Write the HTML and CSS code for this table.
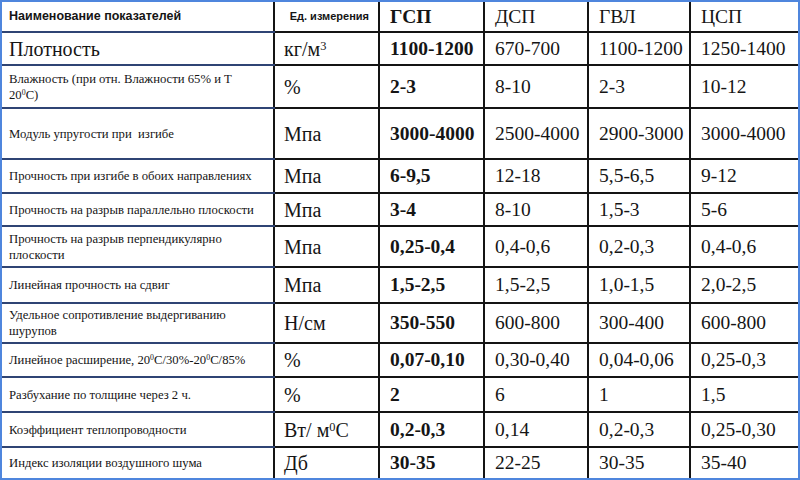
FILE: index.html
```html
<!DOCTYPE html>
<html lang="ru">
<head>
<meta charset="utf-8">
<title>Сравнение листовых материалов</title>
<link rel="stylesheet" href="styles.css">
</head>
<body>
<div class="frame">
<table class="specs">
  <colgroup>
    <col class="c-name"><col class="c-unit"><col class="c-gsp"><col class="c-dsp"><col class="c-gvl"><col class="c-csp">
  </colgroup>
  <tr class="h-head">
    <th class="hdr-name">Наименование показателей</th>
    <th class="hdr-unit">Ед. измерения</th>
    <th class="val bold">ГСП</th>
    <th class="val">ДСП</th>
    <th class="val">ГВЛ</th>
    <th class="val">ЦСП</th>
  </tr>
  <tr class="h-33">
    <td class="name big">Плотность</td>
    <td class="unit">кг/м<sup>3</sup></td>
    <td class="val bold">1100-1200</td>
    <td class="val">670-700</td>
    <td class="val">1100-1200</td>
    <td class="val">1250-1400</td>
  </tr>
  <tr class="h-43">
    <td class="name">Влажность (при отн. Влажности 65% и Т<br>20<sup>0</sup>С)</td>
    <td class="unit">%</td>
    <td class="val bold">2-3</td>
    <td class="val">8-10</td>
    <td class="val">2-3</td>
    <td class="val">10-12</td>
  </tr>
  <tr class="h-51">
    <td class="name">Модуль упругости при &nbsp;изгибе</td>
    <td class="unit">Мпа</td>
    <td class="val bold">3000-4000</td>
    <td class="val">2500-4000</td>
    <td class="val">2900-3000</td>
    <td class="val">3000-4000</td>
  </tr>
  <tr class="h-34">
    <td class="name">Прочность при изгибе в обоих направлениях</td>
    <td class="unit">Мпа</td>
    <td class="val bold">6-9,5</td>
    <td class="val">12-18</td>
    <td class="val">5,5-6,5</td>
    <td class="val">9-12</td>
  </tr>
  <tr class="h-33">
    <td class="name">Прочность на разрыв параллельно плоскости</td>
    <td class="unit">Мпа</td>
    <td class="val bold">3-4</td>
    <td class="val">8-10</td>
    <td class="val">1,5-3</td>
    <td class="val">5-6</td>
  </tr>
  <tr class="h-41">
    <td class="name">Прочность на разрыв перпендикулярно<br>плоскости</td>
    <td class="unit">Мпа</td>
    <td class="val bold">0,25-0,4</td>
    <td class="val">0,4-0,6</td>
    <td class="val">0,2-0,3</td>
    <td class="val">0,4-0,6</td>
  </tr>
  <tr class="h-36">
    <td class="name">Линейная прочность на сдвиг</td>
    <td class="unit">Мпа</td>
    <td class="val bold">1,5-2,5</td>
    <td class="val">1,5-2,5</td>
    <td class="val">1,0-1,5</td>
    <td class="val">2,0-2,5</td>
  </tr>
  <tr class="h-40">
    <td class="name">Удельное сопротивление выдергиванию<br>шурупов</td>
    <td class="unit">Н/см</td>
    <td class="val bold">350-550</td>
    <td class="val">600-800</td>
    <td class="val">300-400</td>
    <td class="val">600-800</td>
  </tr>
  <tr class="h-34">
    <td class="name">Линейное расширение, 20<sup>0</sup>С/30%-20<sup>0</sup>С/85%</td>
    <td class="unit">%</td>
    <td class="val bold">0,07-0,10</td>
    <td class="val">0,30-0,40</td>
    <td class="val">0,04-0,06</td>
    <td class="val">0,25-0,3</td>
  </tr>
  <tr class="h-35">
    <td class="name">Разбухание по толщине через 2 ч.</td>
    <td class="unit">%</td>
    <td class="val bold">2</td>
    <td class="val">6</td>
    <td class="val">1</td>
    <td class="val">1,5</td>
  </tr>
  <tr class="h-35">
    <td class="name">Коэффициент теплопроводности</td>
    <td class="unit">Вт/ м<sup>0</sup>С</td>
    <td class="val bold">0,2-0,3</td>
    <td class="val">0,14</td>
    <td class="val">0,2-0,3</td>
    <td class="val">0,25-0,30</td>
  </tr>
  <tr class="h-31">
    <td class="name">Индекс изоляции воздушного шума</td>
    <td class="unit">Дб</td>
    <td class="val bold">30-35</td>
    <td class="val">22-25</td>
    <td class="val">30-35</td>
    <td class="val">35-40</td>
  </tr>
</table>
</div>
</body>
</html>
```

FILE: styles.css
```css
html, body {
  margin: 0;
  padding: 0;
  background: #ffffff;
}

.frame {
  width: 800px;
  height: 480px;
  box-sizing: border-box;
  border: 2px solid #4f86dd;
  overflow: hidden;
}

.specs {
  width: 796px;
  border-collapse: collapse;
  table-layout: fixed;
  font-family: "Liberation Serif", "Times New Roman", serif;
  color: #151515;
}

.c-name { width: 272px; }
.c-unit { width: 105px; }
.c-gsp { width: 105px; }
.c-dsp { width: 104px; }
.c-gvl { width: 102px; }
.c-csp { width: 108px; }

.specs th,
.specs td {
  border: 2px solid #141414;
  padding: 0 4px 0 10px;
  vertical-align: middle;
  text-align: left;
  font-weight: normal;
  white-space: nowrap;
  line-height: 1.2;
}

.specs tr:first-child th { border-top: none; }
.specs tr:last-child td { border-bottom: none; }
.specs tr > :first-child { border-left: none; }
.specs tr > :last-child { border-right: none; }

.specs .name {
  font-family: "Liberation Serif", "Times New Roman", serif;
  padding-left: 7px;
  font-size: 12.7px;
  line-height: 16px;
  border-top-color: #2f4474;
  border-bottom-color: #2f4474;
}

.specs .name.big {
  font-size: 20px;
  line-height: 22px;
}

.specs .unit {
  font-family: "Liberation Serif", "Times New Roman", serif;
  font-size: 20px;
  padding-left: 9px;
}

.specs .val {
  font-family: "Liberation Serif", "Times New Roman", serif;
  font-size: 19.5px;
}

.specs .bold {
  font-weight: bold;
}

.specs .hdr-name {
  font-family: "Liberation Sans", Arial, sans-serif;
  font-weight: bold;
  font-size: 12.5px;
  padding-left: 7px;
  border-bottom-color: #2f4474;
}

.specs .hdr-unit {
  font-family: "Liberation Sans", Arial, sans-serif;
  font-weight: bold;
  font-size: 11px;
  text-align: right;
  padding-right: 9px;
}

.specs sup {
  font-size: 0.62em;
  line-height: 0;
  vertical-align: 0.5em;
}

.h-head { height: 30px; }
.h-31 { height: 31px; }
.h-33 { height: 33px; }
.h-34 { height: 34px; }
.h-35 { height: 35px; }
.h-36 { height: 36px; }
.h-40 { height: 40px; }
.h-41 { height: 41px; }
.h-43 { height: 43px; }
.h-51 { height: 51px; }
```
